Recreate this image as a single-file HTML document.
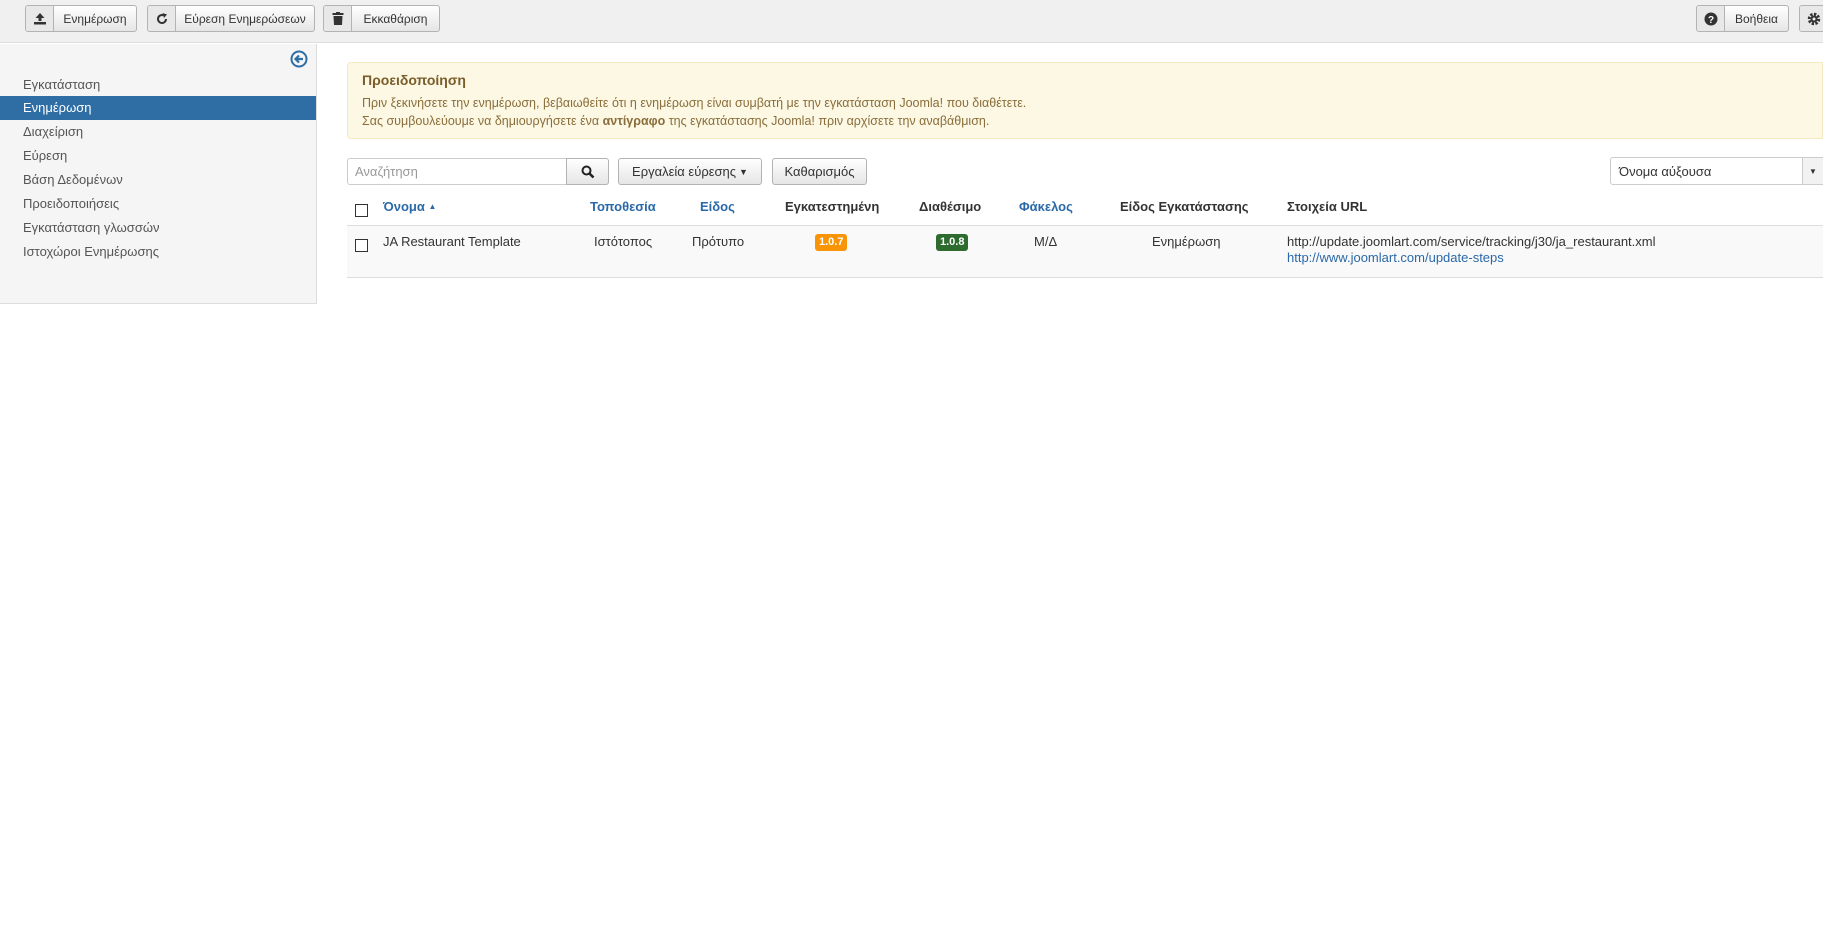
<!DOCTYPE html>
<html><head><meta charset="utf-8"><style>
*{box-sizing:border-box;margin:0;padding:0}
body{width:1823px;height:929px;overflow:hidden;background:#fff;font-family:"Liberation Sans",sans-serif;font-size:13px;color:#333;position:relative}
.abs{position:absolute}
.tb{left:0;top:0;width:1823px;height:43px;background:#f0f0f0;border-bottom:1px solid #ddd}
.btn{position:absolute;top:5px;height:27px;border:1px solid #b3b3b3;border-radius:3px;background:linear-gradient(#fff,#e6e6e6);display:flex;align-items:center;font-size:12px;color:#333;white-space:nowrap;overflow:hidden}
.btn .ic{flex:0 0 28px;width:28px;height:100%;border-right:1px solid #b3b3b3;display:flex;align-items:center;justify-content:center;background:#e8e8e8}
.btn .tx{padding:0 4px;flex:1;text-align:center}
.side{left:0;top:44px;width:317px;height:260px;background:#f5f5f5;border-right:1px solid #ddd;border-bottom:1px solid #ddd}
.it{position:absolute;left:0;width:316px;height:24px;line-height:24px;padding-left:23px;color:#555}
.it.a{background:#2f6ea5;color:#fff}
.alert{left:347px;top:62px;width:1476px;height:77px;background:#fcf8e3;border:1px solid #f5e9c3;border-radius:4px 0 0 4px;color:#8a6d3b;padding:9px 14px}
.alert h4{font-size:14px;font-weight:bold;margin-bottom:6px;color:#7a5d2b}
.alert p{font-size:12.5px;line-height:18px}
.inp{border:1px solid #ccc;background:#fff}
.gbtn{position:absolute;border:1px solid #b3b3b3;border-radius:3px;background:linear-gradient(#fff,#e6e6e6);display:flex;align-items:center;justify-content:center;font-size:13px;white-space:nowrap}
.th{position:absolute;top:199px;font-weight:bold;line-height:16px}
.lk{color:#2a69a8}
.cb{position:absolute;width:13px;height:13px;border:1px solid #333;background:#fff}
.td{position:absolute;top:234px;line-height:16px}
.badge{position:absolute;top:234px;height:17px;line-height:17px;padding:0 4px;color:#fff;font-size:11px;font-weight:bold;border-radius:3px}
</style></head><body>
<div class="abs tb"></div>
<div class="btn" style="left:25px;width:112px"><div class="ic"><svg width="14" height="13" viewBox="0 0 14 13"><path d="M7 1 L2.5 6 H5.5 V9 H8.5 V6 H11.5Z M1 10 H13 V12.5 H1Z" fill="#333"/></svg></div><span class="tx">Ενημέρωση</span></div>
<div class="btn" style="left:147px;width:168px"><div class="ic"><svg width="14" height="14" viewBox="0 0 14 14"><path d="M11 7 A4 4 0 1 1 8.5 3.3" stroke="#333" stroke-width="2" fill="none"/><path d="M7.5 1 L12 2.5 L9 6Z" fill="#333"/></svg></div><span class="tx">Εύρεση Ενημερώσεων</span></div>
<div class="btn" style="left:323px;width:117px"><div class="ic"><svg width="12" height="13" viewBox="0 0 12 13"><rect x="0.5" y="1" width="11" height="2" fill="#333"/><rect x="4" y="0" width="4" height="1.5" fill="#333"/><path d="M1.5 4 H10.5 L10 13 H2Z" fill="#333"/></svg></div><span class="tx">Εκκαθάριση</span></div>
<div class="btn" style="left:1696px;width:93px"><div class="ic"><svg width="14" height="14" viewBox="0 0 14 14"><circle cx="7" cy="7" r="6.5" fill="#333"/><text x="7" y="11" font-size="10" font-weight="bold" fill="#fff" text-anchor="middle" font-family="Liberation Sans">?</text></svg></div><span class="tx">Βοήθεια</span></div>
<div class="btn" style="left:1799px;width:40px"><div class="ic" style="border:none"><svg width="14" height="14" viewBox="0 0 14 14"><circle cx="7" cy="7" r="4.5" fill="none" stroke="#333" stroke-width="3.5" stroke-dasharray="2.2 1.3"/><circle cx="7" cy="7" r="3.5" fill="#333"/><circle cx="7" cy="7" r="1.5" fill="#eee"/></svg></div></div>

<div class="abs side">
<svg class="abs" style="left:290px;top:6px" width="18" height="18" viewBox="0 0 18 18"><circle cx="9" cy="9" r="7.5" fill="none" stroke="#2f6ea5" stroke-width="2"/><path d="M13 9 H6 M9 5.5 L5.5 9 L9 12.5" stroke="#2f6ea5" stroke-width="2.2" fill="none"/></svg>
<div class="it" style="top:29px">Εγκατάσταση</div>
<div class="it a" style="top:52px">Ενημέρωση</div>
<div class="it" style="top:76px">Διαχείριση</div>
<div class="it" style="top:100px">Εύρεση</div>
<div class="it" style="top:124px">Βάση Δεδομένων</div>
<div class="it" style="top:148px">Προειδοποιήσεις</div>
<div class="it" style="top:172px">Εγκατάσταση γλωσσών</div>
<div class="it" style="top:196px">Ιστοχώροι Ενημέρωσης</div>
</div>

<div class="abs alert"><h4>Προειδοποίηση</h4><p>Πριν ξεκινήσετε την ενημέρωση, βεβαιωθείτε ότι η ενημέρωση είναι συμβατή με την εγκατάσταση Joomla! που διαθέτετε.<br>Σας συμβουλεύουμε να δημιουργήσετε ένα <b>αντίγραφο</b> της εγκατάστασης Joomla! πριν αρχίσετε την αναβάθμιση.</p></div>

<div class="abs inp" style="left:347px;top:158px;width:220px;height:27px;border-radius:3px 0 0 3px;padding:5px 7px;color:#999">Αναζήτηση</div>
<div class="gbtn" style="left:566px;top:158px;width:43px;height:27px;border-radius:0 3px 3px 0"><svg width="14" height="14" viewBox="0 0 14 14"><circle cx="5.5" cy="5.5" r="4" fill="none" stroke="#222" stroke-width="2"/><path d="M8.5 8.5 L12.5 12.5" stroke="#222" stroke-width="2.6"/></svg></div>
<div class="gbtn" style="left:618px;top:158px;width:144px;height:27px">Εργαλεία εύρεσης <span style="font-size:9px;margin-left:3px">▼</span></div>
<div class="gbtn" style="left:772px;top:158px;width:95px;height:27px">Καθαρισμός</div>
<div class="abs inp" style="left:1610px;top:157px;width:200px;height:28px;border-radius:3px 0 0 3px;padding:6px 8px">Όνομα αύξουσα</div>
<div class="gbtn" style="left:1802px;top:157px;width:30px;height:28px;border-color:#ccc;border-radius:0;background:#f2f2f2"><span style="font-size:8px;margin-right:8px">▼</span></div>

<div class="cb" style="left:355px;top:204px"></div>
<div class="th lk" style="left:383px">Όνομα <span style="font-size:8px;vertical-align:2px">▲</span></div>
<div class="th lk" style="left:590px">Τοποθεσία</div>
<div class="th lk" style="left:700px">Είδος</div>
<div class="th" style="left:785px">Εγκατεστημένη</div>
<div class="th" style="left:919px">Διαθέσιμο</div>
<div class="th lk" style="left:1019px">Φάκελος</div>
<div class="th" style="left:1120px">Είδος Εγκατάστασης</div>
<div class="th" style="left:1287px">Στοιχεία URL</div>
<div class="abs" style="left:347px;top:225px;width:1476px;height:53px;background:#f9f9f9;border-top:1px solid #ddd;border-bottom:1px solid #ddd"></div>
<div class="cb" style="left:355px;top:239px"></div>
<div class="td" style="left:383px">JA Restaurant Template</div>
<div class="td" style="left:594px">Ιστότοπος</div>
<div class="td" style="left:692px">Πρότυπο</div>
<div class="badge" style="left:815px;background:#f89406">1.0.7</div>
<div class="badge" style="left:936px;background:#2e6b2e">1.0.8</div>
<div class="td" style="left:1034px">Μ/Δ</div>
<div class="td" style="left:1152px">Ενημέρωση</div>
<div class="td" style="left:1287px">http://update.joomlart.com/service/tracking/j30/ja_restaurant.xml<br><span class="lk">http://www.joomlart.com/update-steps</span></div>
</body></html>
